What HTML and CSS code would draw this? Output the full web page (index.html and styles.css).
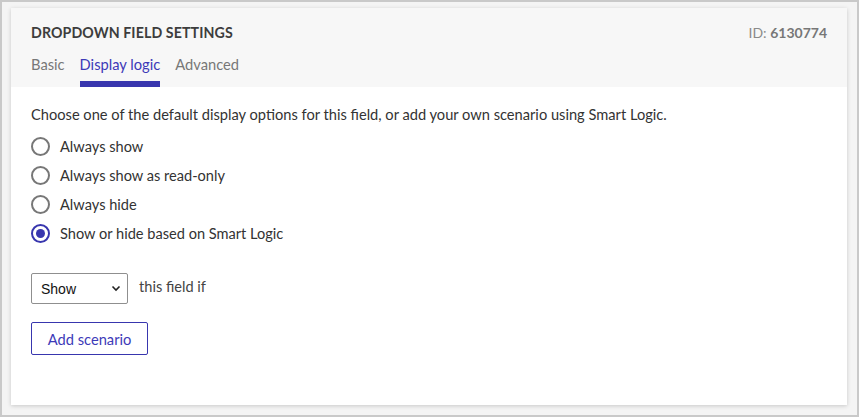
FILE: index.html
```html
<!DOCTYPE html>
<html>
<head>
<meta charset="utf-8">
<link rel="stylesheet" href="styles.css">
</head>
<body>
<div class="frame">
  <div class="card">
    <div class="card-head">
      <div class="title-row">
        <h1 class="title">DROPDOWN FIELD SETTINGS</h1>
        <div class="field-id">ID: <b>6130774</b></div>
      </div>
      <nav class="tabs">
        <span class="tab">Basic</span>
        <span class="tab active">Display logic</span>
        <span class="tab">Advanced</span>
      </nav>
    </div>
    <div class="card-body">
      <p class="intro">Choose one of the default display options for this field, or add your own scenario using Smart Logic.</p>
      <div class="options">
        <label class="option"><span class="radio"></span>Always show</label>
        <label class="option"><span class="radio"></span>Always show as read-only</label>
        <label class="option"><span class="radio"></span>Always hide</label>
        <label class="option"><span class="radio checked"></span>Show or hide based on Smart Logic</label>
      </div>
      <div class="rule-row">
        <div class="select">
          <span>Show</span>
          <svg class="chev" width="10" height="7" viewBox="0 0 10 7"><path d="M1.5 1.5 L5 5 L8.5 1.5" fill="none" stroke="#222" stroke-width="1.6"/></svg>
        </div>
        <span class="rule-text">this field if</span>
      </div>
      <button class="btn">Add scenario</button>
    </div>
  </div>
</div>
</body>
</html>
```
FILE: styles.css
```css
* { box-sizing: border-box; }
html, body { margin: 0; padding: 0; }
body {
  width: 859px;
  height: 417px;
  background: #ffffff;
  font-family: Lato, "Noto Sans", sans-serif;
  color: #333;
  overflow: hidden;
}
.frame {
  width: 859px;
  height: 417px;
  border: 2px solid #c9c9c9;
  background: #f4f4f4;
  padding: 6px 10px 10px 9px;
}
.card {
  width: 836px;
  height: 397px;
  background: #fff;
  box-shadow: 0 1px 4px rgba(0,0,0,0.18);
  display: flex;
  flex-direction: column;
}
.card-head {
  background: #f7f7f7;
  padding: 0 20px;
  height: 79px;
  display: flex;
  flex-direction: column;
}
.title-row {
  display: flex;
  justify-content: space-between;
  align-items: center;
  height: 47px;
}
.title {
  margin: 0;
  font-size: 14.2px;
  font-weight: 700;
  color: #3d3d3d;
  letter-spacing: 0.1px;
  padding-top: 1px;
}
.field-id {
  font-size: 14px;
  color: #8a8a8a;
  padding-top: 1px;
}
.field-id b { color: #777; font-weight: 700; }
.tabs {
  display: flex;
  gap: 15px;
  height: 32px;
}
.tab {
  font-size: 14.7px;
  color: #777;
  padding-top: 0;
}
.tab.active {
  color: #3d3ab8;
  border-bottom: 6px solid #3836ae;
}
.card-body {
  padding: 18px 20px 0 20px;
}
.intro {
  margin: 0 0 7px 0;
  font-size: 14.65px;
  color: #333;
  line-height: 20px;
}
.options {
  display: flex;
  flex-direction: column;
}
.option {
  display: flex;
  align-items: center;
  height: 29px;
  font-size: 14.6px;
  color: #333;
}
.radio {
  width: 19px;
  height: 19px;
  border: 2px solid #777;
  border-radius: 50%;
  margin-right: 10px;
  display: flex;
  align-items: center;
  justify-content: center;
}
.radio.checked { border-color: #3836ae; }
.radio.checked::after {
  content: "";
  width: 9px;
  height: 9px;
  border-radius: 50%;
  background: #3836ae;
}
.rule-row {
  display: flex;
  align-items: center;
  gap: 11px;
  margin-top: 25px;
}
.select {
  width: 97px;
  height: 31px;
  border: 1px solid #8f8f8f;
  border-radius: 2px;
  display: flex;
  align-items: center;
  justify-content: space-between;
  padding: 0 6px 0 9px;
  font-family: "Liberation Sans", Arial, sans-serif;
  font-size: 14px;
  color: #111;
  background: #fff;
}
.rule-text {
  font-size: 14.6px;
  color: #444;
  margin-top: -4px;
}
.btn {
  margin-top: 18px;
  width: 117px;
  height: 33px;
  border: 1px solid #3836ae;
  border-radius: 2px;
  background: #fff;
  color: #3d3ab8;
  font-family: Lato, "Noto Sans", sans-serif;
  font-size: 14.7px;
  padding: 0;
}
```
